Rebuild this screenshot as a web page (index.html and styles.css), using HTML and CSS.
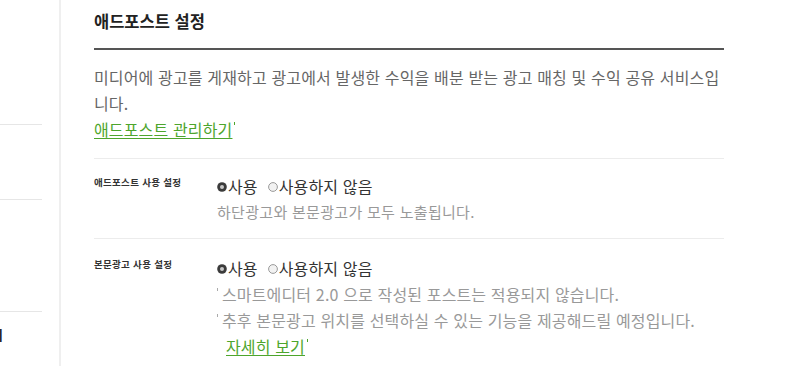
FILE: index.html
```html
<!DOCTYPE html>
<html lang="ko">
<head>
<meta charset="utf-8">
<title>애드포스트 설정</title>
<link rel="stylesheet" href="styles.css">
</head>
<body>
<div class="page">
  <aside class="side">
    <div class="side-item s1"></div>
    <div class="side-item s2"></div>
    <div class="side-item s3"></div>
    <div class="side-cut"><span>관리</span></div>
  </aside>
  <main class="main">
    <h2 class="title">애드포스트 설정</h2>
    <div class="intro">
      <p class="desc">미디어에 광고를 게재하고 광고에서 발생한 수익을 배분 받는 광고 매칭 및 수익 공유 서비스입니다.</p>
      <a class="link mark" href="#">애드포스트 관리하기</a>
    </div>
    <div class="row first">
      <div class="row-label">애드포스트 사용 설정</div>
      <div class="row-body">
        <div class="radios">
          <span class="opt">
            <svg class="rd" width="10" height="10" viewBox="0 0 10 10"><circle cx="5" cy="5" r="4.8" fill="#3b3b3b"/><circle cx="5" cy="5" r="2" fill="#c8c8c8"/></svg>사용
          </span>
          <span class="opt">
            <svg class="rd" width="10" height="10" viewBox="0 0 10 10"><circle cx="5" cy="5" r="4.4" fill="#f2f2f2" stroke="#8f8f8f" stroke-width="0.9"/></svg>사용하지 않음
          </span>
        </div>
        <p class="note small">하단광고와 본문광고가 모두 노출됩니다.</p>
      </div>
    </div>
    <div class="row second">
      <div class="row-label">본문광고 사용 설정</div>
      <div class="row-body">
        <div class="radios">
          <span class="opt">
            <svg class="rd" width="10" height="10" viewBox="0 0 10 10"><circle cx="5" cy="5" r="4.8" fill="#3b3b3b"/><circle cx="5" cy="5" r="2" fill="#c8c8c8"/></svg>사용
          </span>
          <span class="opt">
            <svg class="rd" width="10" height="10" viewBox="0 0 10 10"><circle cx="5" cy="5" r="4.4" fill="#f2f2f2" stroke="#8f8f8f" stroke-width="0.9"/></svg>사용하지 않음
          </span>
        </div>
        <p class="note tick">스마트에디터 2.0 으로 작성된 포스트는 적용되지 않습니다.</p>
        <p class="note tick">추후 본문광고 위치를 선택하실 수 있는 기능을 제공해드릴 예정입니다.</p>
        <a class="link mark more" href="#">자세히 보기</a>
      </div>
    </div>
  </main>
</div>
</body>
</html>
```

FILE: styles.css
```css
html, body {
  margin: 0;
  padding: 0;
  background: #fff;
}
body {
  font-family: "Noto Sans CJK KR", "Noto Sans", sans-serif;
  color: #333;
  overflow: hidden;
}
.page {
  display: flex;
  height: 366px;
}
.side {
  width: 59px;
  flex: none;
  border-right: 2px solid #efefef;
  overflow: hidden;
}
.side-item {
  width: 42px;
  border-bottom: 1px solid #e6e6e6;
}
.s1 { height: 124px; }
.s2 { height: 74px; }
.s3 { height: 111px; }
.side-cut {
  padding-top: 13px;
  line-height: 20px;
  font-size: 13px;
  font-weight: 700;
  color: #222;
  white-space: nowrap;
}
.side-cut span {
  display: inline-block;
  margin-left: -21px;
}
.main {
  width: 630px;
  padding-left: 33px;
}
.title {
  margin: 0;
  padding: 11px 0 17px;
  font-size: 16.5px;
  line-height: 20px;
  font-weight: 700;
  color: #222;
  border-bottom: 2px solid #555;
}
.intro {
  padding: 14px 0 16px;
  border-bottom: 1px solid #ececec;
}
.desc {
  margin: 0;
  font-size: 16px;
  line-height: 26px;
  letter-spacing: 0.15px;
  color: #666;
}
.link {
  display: inline-block;
  font-size: 16px;
  line-height: 26px;
  letter-spacing: 0.15px;
  color: #4da52c;
  text-decoration: underline;
  text-underline-offset: 2px;
}
.mark::after {
  content: "";
  display: inline-block;
  width: 1px;
  height: 3px;
  background: #4da52c;
  margin-left: 2px;
  vertical-align: 11px;
}
.row {
  display: flex;
}
.row.first {
  padding: 14px 0 13px;
  border-bottom: 1px solid #ececec;
}
.row.second {
  padding-top: 16px;
}
.row-label {
  width: 123px;
  flex: none;
  font-size: 9.5px;
  line-height: 18px;
  font-weight: 700;
  letter-spacing: 0.3px;
  color: #333;
}
.row-body {
  flex: 1;
}
.radios {
  display: flex;
  align-items: center;
  gap: 10px;
  height: 26px;
  font-size: 16px;
  letter-spacing: 0.15px;
  color: #333;
}
.opt {
  display: flex;
  align-items: center;
}
.rd {
  display: block;
  margin-right: 1px;
  margin-top: 2px;
}
.note {
  margin: 0;
  font-size: 16px;
  line-height: 26px;
  letter-spacing: 0.15px;
  color: #999;
}
.note.small {
  font-size: 15px;
  letter-spacing: 0.3px;
}
.tick {
  position: relative;
  padding-left: 5px;
}
.tick::before {
  content: "";
  position: absolute;
  left: 0;
  top: 7px;
  width: 1px;
  height: 3px;
  background: #aaa;
}
.more {
  margin-left: 9px;
}
```
